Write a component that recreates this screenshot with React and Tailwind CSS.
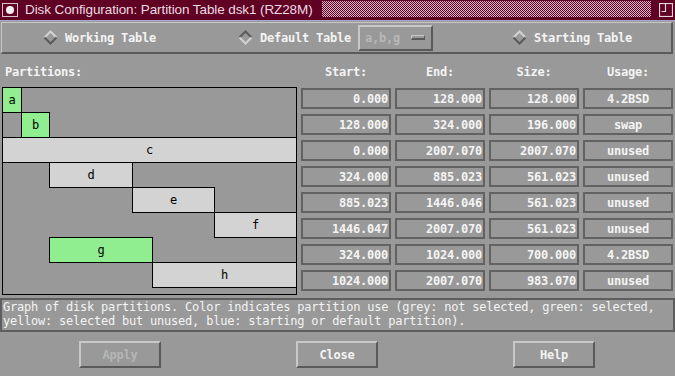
import React from "react";

const TOTAL = 2007.07;
const W = 294;

const parts = [
  { n: "a", s: 0, e: 128, start: "0.000", end: "128.000", size: "128.000", usage: "4.2BSD", sel: true },
  { n: "b", s: 128, e: 324, start: "128.000", end: "324.000", size: "196.000", usage: "swap", sel: true },
  { n: "c", s: 0, e: 2007.07, start: "0.000", end: "2007.070", size: "2007.070", usage: "unused" },
  { n: "d", s: 324, e: 885.023, start: "324.000", end: "885.023", size: "561.023", usage: "unused" },
  { n: "e", s: 885.023, e: 1446.046, start: "885.023", end: "1446.046", size: "561.023", usage: "unused" },
  { n: "f", s: 1446.047, e: 2007.07, start: "1446.047", end: "2007.070", size: "561.023", usage: "unused" },
  { n: "g", s: 324, e: 1024, start: "324.000", end: "1024.000", size: "700.000", usage: "4.2BSD", sel: true },
  { n: "h", s: 1024, e: 2007.07, start: "1024.000", end: "2007.070", size: "983.070", usage: "unused" },
];

function Diamond({ sunken }) {
  const light = "#d2d2d2";
  const dark = "#5a5a5a";
  const top = sunken ? dark : light;
  const bot = sunken ? light : dark;
  return (
    <svg width="15" height="15" viewBox="0 0 15 15" className="shrink-0">
      <path d="M1.5 7.5 L7.5 1.5 L13.5 7.5" fill="none" stroke={top} strokeWidth="2" />
      <path d="M1.5 7.5 L7.5 13.5 L13.5 7.5" fill="none" stroke={bot} strokeWidth="2" />
    </svg>
  );
}

function Field({ children, center }) {
  return (
    <div
      className={
        "border-2 border-[#626262] flex items-center text-[#f4f4f4] font-bold text-[12px] tracking-[-0.22px] leading-none " +
        (center ? "justify-center" : "justify-end pr-[1px]")
      }
    >
      {children}
    </div>
  );
}

function Button({ children, disabled }) {
  return (
    <div
      className={
        "w-[82px] h-[27px] shrink-0 border-2 border-t-[#c8c8c8] border-l-[#c8c8c8] border-b-[#5a5a5a] border-r-[#5a5a5a] flex items-center justify-center font-bold text-[12px] tracking-[-0.22px] " +
        (disabled ? "text-[#b6b6b6]" : "text-[#f4f4f4]")
      }
    >
      {children}
    </div>
  );
}

export default function App() {
  return (
    <div className="w-[675px] h-[376px] bg-[#999999] overflow-hidden font-['DejaVu_Sans_Mono',monospace] select-none">
      {/* Title bar */}
      <div className="flex h-[20px] bg-[#600022]">
        <div className="w-[20px] shrink-0 flex items-center justify-center">
          <svg width="20" height="20" viewBox="0 0 20 20">
            <rect x="2.5" y="3.5" width="15" height="13" fill="none" stroke="#d8c4cc" strokeWidth="1" />
            <circle cx="10" cy="10" r="4" fill="#f4eef0" />
          </svg>
        </div>
        <div className="w-[302px] shrink-0 pl-[5px] flex items-center text-[#eadce2] text-[13.5px] tracking-[-0.1px] font-['Liberation_Sans',Arial,sans-serif] whitespace-nowrap overflow-hidden">
          Disk Configuration: Partition Table dsk1 (RZ28M)
        </div>
        <div className="flex-1 mt-[1px] h-[16px] bg-[repeating-conic-gradient(#600022_0%_25%,#d8b8c8_0%_50%)] bg-[length:2px_2px]" />
        <div className="w-[24px] shrink-0 flex items-start pt-[3px] pl-[8px]">
          <svg width="14" height="14" viewBox="0 0 14 14">
            <rect x="0.5" y="0.5" width="13" height="13" fill="none" stroke="#e6d4dc" strokeWidth="1.2" />
            <path d="M2.5 8.5 H6.5 V0.5" fill="none" stroke="#e6d4dc" strokeWidth="1.2" />
          </svg>
        </div>
      </div>
      <div className="h-[1px] bg-[#a8a8cc]" />

      {/* Radio frame */}
      <div className="mt-[1px] ml-[1px] mr-[2px] h-[32px] border-l border-t border-l-[#c8c8c8] border-t-[#c8c8c8] border-r-2 border-b-2 border-r-[#5a5a5a] border-b-[#5a5a5a] flex items-center text-[#f4f4f4] font-bold text-[12px] tracking-[-0.22px]">
        <div className="ml-[41px] w-[195px] flex items-center gap-[7px]">
          <Diamond />
          <span>Working Table</span>
        </div>
        <div className="w-[274px] flex items-center gap-[7px]">
          <Diamond sunken />
          <span>Default Table</span>
          <div className="w-[75px] h-[26px] border-2 border-t-[#c8c8c8] border-l-[#c8c8c8] border-b-[#5a5a5a] border-r-[#5a5a5a] flex items-center pl-[5px] text-[#b8b8b8]">
            <span>a,b,g</span>
            <div className="ml-auto mr-[6px] w-[14px] h-[5px] border-t border-l border-t-[#c8c8c8] border-l-[#c8c8c8] border-b-2 border-r border-b-[#5a5a5a] border-r-[#5a5a5a]" />
          </div>
        </div>
        <div className="flex items-center gap-[7px]">
          <Diamond />
          <span>Starting Table</span>
        </div>
      </div>

      {/* Header row */}
      <div className="flex h-[33px] items-end pb-[8px] text-[#f4f4f4] font-bold text-[12px] tracking-[-0.22px] leading-[14px]">
        <div className="w-[301px] shrink-0 pl-[5px]">Partitions:</div>
        <div className="grid grid-cols-[90px_90px_90px_90px] gap-x-[4px] text-center">
          <div>Start:</div>
          <div>End:</div>
          <div>Size:</div>
          <div>Usage:</div>
        </div>
      </div>

      {/* Main area */}
      <div className="flex h-[208px]">
        <div className="ml-[2px] w-[295px] h-[208px] shrink-0 border border-black">
          <div className="-m-px flex flex-col">
            {parts.map((p, i) => {
              const L = Math.round((p.s / TOTAL) * W);
              const R = Math.round((p.e / TOTAL) * W);
              return (
                <div key={p.n} className={"flex h-[26px] shrink-0 " + (i === 0 ? "" : "-mt-px")}>
                  <div className="shrink-0" style={{ width: L }} />
                  <div
                    className={
                      "shrink-0 h-full border border-black flex items-center justify-center text-black text-[12px] " +
                      (p.sel ? "bg-[#90ee90]" : "bg-[#d3d3d3]")
                    }
                    style={{ width: R - L + 1 }}
                  >
                    {p.n}
                  </div>
                </div>
              );
            })}
          </div>
        </div>
        <div className="ml-[4px] mt-[1px] grid grid-cols-[90px_90px_90px_90px] auto-rows-[21px] gap-x-[4px] gap-y-[5px] content-start">
          {parts.map((p) => (
            <React.Fragment key={p.n}>
              <Field>{p.start}</Field>
              <Field>{p.end}</Field>
              <Field>{p.size}</Field>
              <Field center>{p.usage}</Field>
            </React.Fragment>
          ))}
        </div>
      </div>

      {/* Info box */}
      <div className="mt-[3px] h-[34px] border-2 border-[#5e5e5e] pl-[1px] text-[#f4f4f4] text-[12px] tracking-[-0.22px] leading-[14px] whitespace-nowrap overflow-hidden">
        <div>Graph of disk partitions. Color indicates partition use (grey: not selected, green: selected,</div>
        <div>yellow: selected but unused, blue: starting or default partition).</div>
      </div>

      {/* Buttons */}
      <div className="mt-[9px] flex pl-[79px] gap-[135px]">
        <Button disabled>Apply</Button>
        <Button>Close</Button>
        <Button>Help</Button>
      </div>
    </div>
  );
}
